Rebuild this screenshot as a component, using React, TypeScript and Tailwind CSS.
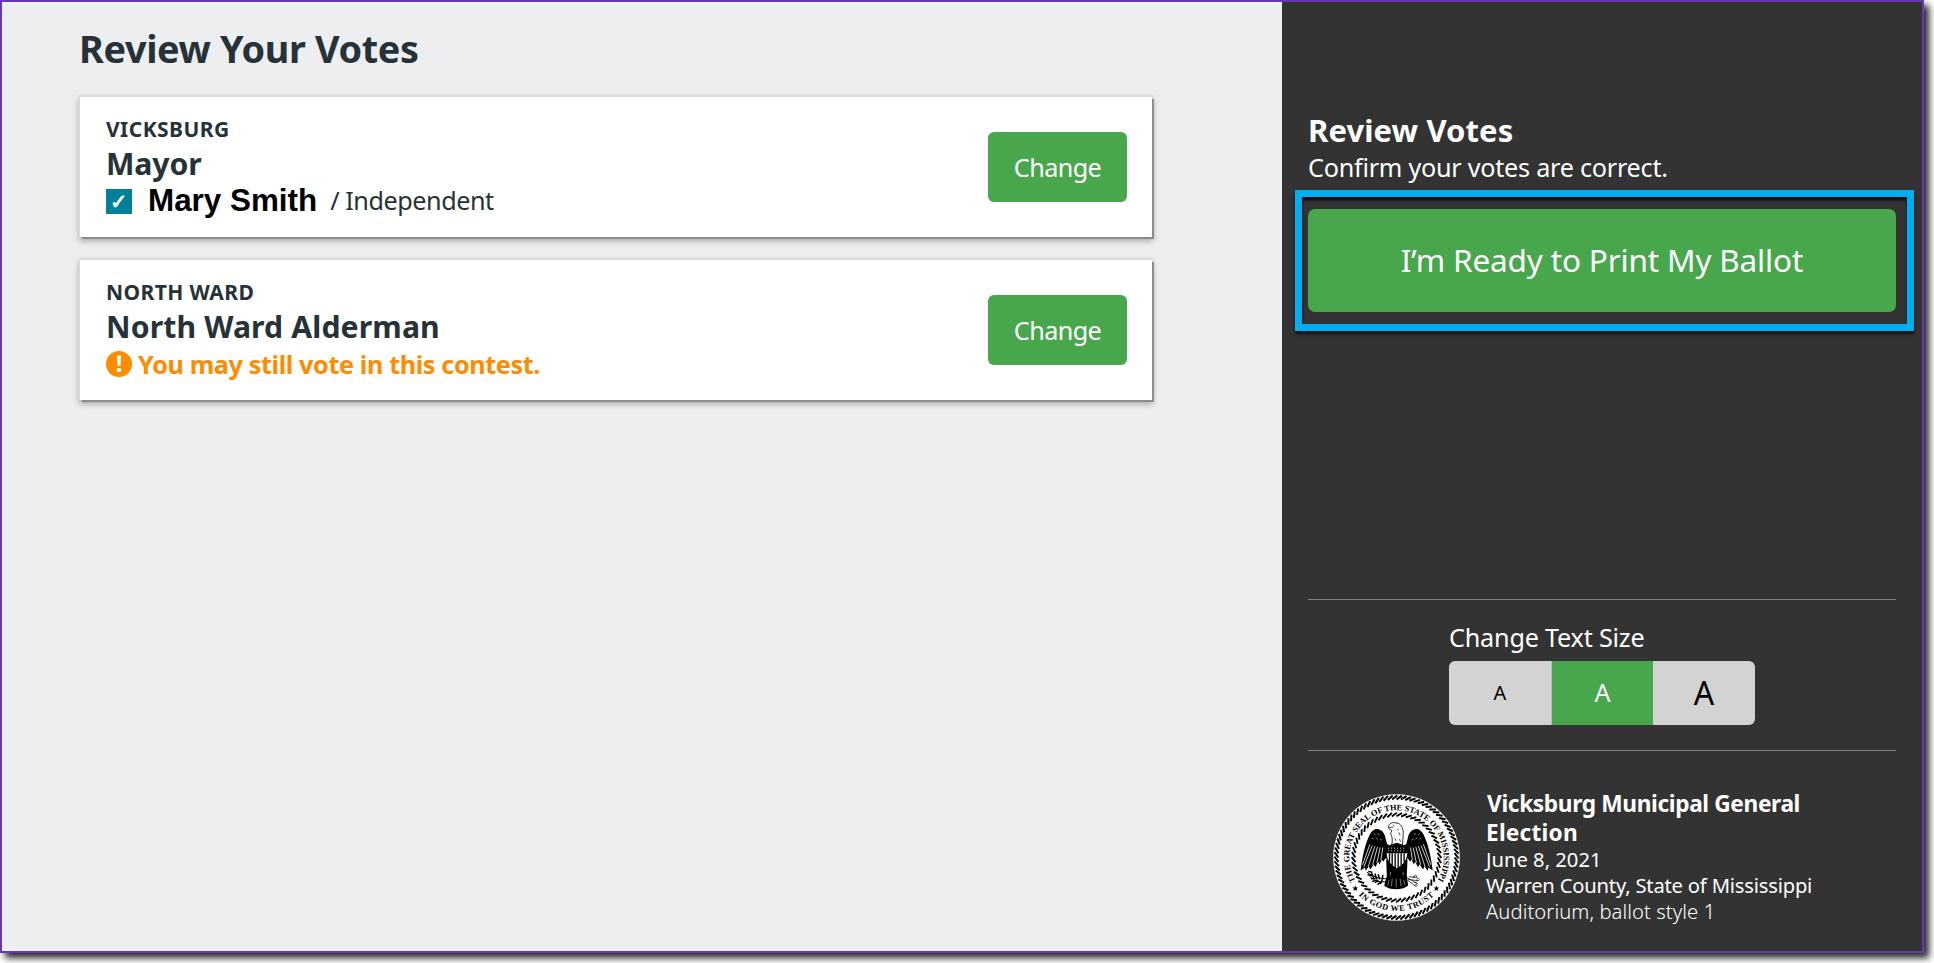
import type { ReactNode } from 'react';

const CX = 261;
const CY = 262;

function polar(r: number, deg: number): string {
  const a = (deg * Math.PI) / 180;
  return `${(CX + r * Math.sin(a)).toFixed(1)} ${(CY - r * Math.cos(a)).toFixed(1)}`;
}

function rope(count: number, inner: number, outer: number, twist: number): string {
  return Array.from({ length: count }, (_, i) => {
    const deg = (i * 360) / count;
    return `M${polar(inner, deg)}L${polar(outer, deg + twist)}`;
  }).join('');
}

const STAR = 'M0-9 2.6-2.8 9-2.8 3.8 1.3 5.8 8 0 4-5.8 8-3.8 1.3-9-2.8-2.6-2.8Z';

function Wing() {
  return (
    <g>
      <path
        d="M202 176C218 177 226 190 228 204L234 226 234 264 227 266 221 275 217 268 210 283 206 275 197 291 193 282 182 298 178 288 168 302 166 292 153 301C158 262 166 222 180 194 186 182 194 176 202 176Z"
        fill="#000"
      />
      <path
        d="M188 226 163 290M196 228 176 290M204 230 189 284M212 232 202 278M220 232 214 270M181 222 159 284"
        stroke="#fff"
        strokeWidth="2.4"
      />
      <path d="M192 190l6 4M204 190l6 4M187 203l6 4M199 203l6 4M211 206l6 4" stroke="#fff" strokeWidth="1.6" />
    </g>
  );
}

function Seal() {
  return (
    <svg viewBox="70 71 382 382" className="h-[127px] w-[127px] shrink-0" fill="none">
      <defs>
        <path id="seal-top" d={`M${polar(142, -122)}A142 142 0 1 1 ${polar(142, 122)}`} />
        <path id="seal-bottom" d={`M${polar(161, 228)}A161 161 0 0 0 ${polar(161, 132)}`} />
      </defs>
      <circle cx={CX} cy={CY} r="190.5" fill="#fff" />
      <path d={rope(84, 175, 187, 5)} stroke="#000" strokeWidth="6" />
      <path d={rope(56, 124, 135, 7)} stroke="#000" strokeWidth="5.6" />
      <g fill="#000" fontFamily="Liberation Serif, serif" fontWeight="700" fontSize="25">
        <text>
          <textPath href="#seal-top" startOffset="6" textLength="591">
            THE GREAT SEAL OF THE STATE OF MISSISSIPPI
          </textPath>
        </text>
        <text>
          <textPath href="#seal-bottom" startOffset="8" textLength="252">
            IN GOD WE TRUST
          </textPath>
        </text>
      </g>
      <path d={STAR} fill="#000" transform="translate(137 355)" />
      <path d={STAR} fill="#000" transform="translate(381 355)" />
      <Wing />
      <g transform="matrix(-1 0 0 1 523 0)">
        <Wing />
      </g>
      <path
        d="M246 226C250 212 249 200 243 190L247 181 237 174C235 166 241 157 252 157L266 159C277 164 283 178 281 194L279 226"
        fill="#fff"
        stroke="#000"
        strokeWidth="2.4"
      />
      <path d="M238 172 252 170M250 164l4 2M256 204l4 8M268 186l4 10M270 206l3 9M263 176l4 5" stroke="#000" strokeWidth="2" />
      <path d="M230 268 294 268 292 318 296 346C284 356 268 358 252 357 240 356 230 352 224 346L232 318Z" fill="#000" />
      <path
        d="M243 306v10M281 306v10M238 330l-3 16M248 326l-2 22M260 326v26M272 326l3 22M283 330l3 14"
        stroke="#fff"
        strokeWidth="1.4"
      />
      <path
        d="M228 222 240 226 262 219 283 226 297 222 295 250C293 272 280 286 262 295 244 286 231 272 230 250Z"
        fill="#fff"
        stroke="#000"
        strokeWidth="3"
      />
      <path d="M229 223 240 227 262 220 283 227 296 223 295 249 230 249Z" fill="#000" />
      <path d="M240 249v28M248 249v36M257 249v42M266 249v42M275 249v37M284 249v28" stroke="#000" strokeWidth="4" />
      <path d="M236 234h52M236 242h52" stroke="#fff" strokeWidth="2.6" strokeDasharray="3 6" />
      <path d="M172 306C190 320 210 326 234 326M180 318C196 334 212 338 232 334" stroke="#000" strokeWidth="3" />
      <path
        d="M176 304l12 2M174 314l14 2M186 308l6 16M196 310l6 18M184 326l14-2M196 338l10-8M206 312l4 16M212 342l6-12M220 314l-2 16M204 344l8-8M188 334l12-4"
        stroke="#000"
        strokeWidth="4.4"
      />
      <path d="M292 322 326 342M294 330 318 348M298 320 324 322M296 328 328 332M310 324l6-8M314 338l8-2" stroke="#000" strokeWidth="2.2" />
      <circle cx="318" cy="318" r="3.5" fill="#fff" stroke="#000" strokeWidth="1.6" />
      <circle cx="326" cy="328" r="3.5" fill="#fff" stroke="#000" strokeWidth="1.6" />
      <circle cx="320" cy="346" r="3" fill="#fff" stroke="#000" strokeWidth="1.6" />
    </svg>
  );
}

function ContestCard({ district, title, titleClass, districtClass, children }: {
  district: string;
  title: string;
  titleClass: string;
  districtClass: string;
  children: ReactNode;
}) {
  return (
    <section className="-ml-px flex h-[140px] w-[1072px] items-center justify-between bg-white pr-[25px] pl-[26px] shadow-[2px_2px_0_#8b8c8c,0_-1px_1px_1px_#dadbdc,0_3px_6px_1px_rgba(0,0,0,0.3)]">
      <div className="h-[102px]">
        <p className={`text-[21px] leading-[26px] font-bold ${districtClass}`}>{district}</p>
        <h2 className={`text-[30.2px] leading-[44px] font-bold ${titleClass}`}>{title}</h2>
        {children}
      </div>
      <button className="h-[70px] w-[139px] rounded-[6px] bg-[#48a74c] text-[25.2px] leading-[70px] tracking-[-0.6px] text-white">
        Change
      </button>
    </section>
  );
}

export default function App() {
  return (
    <div className="h-[963px] w-[1934px] overflow-hidden bg-white font-['Noto_Sans',sans-serif]">
      <div className="flex h-[953px] w-[1924px] border-2 border-[#6737b4] bg-[#edeef0] text-[#263238] shadow-[5px_5px_7px_rgba(0,0,0,0.85)]">
        <main className="flex w-[1280px] shrink-0 flex-col pt-[20px] pl-[79px]">
          <h1 className="-ml-[2px] text-[37.8px] leading-[54px] font-bold tracking-[-0.35px]">Review Your Votes</h1>
          <div className="mt-[21px] flex flex-col gap-[23px]">
            <ContestCard district="VICKSBURG" title="Mayor" districtClass="tracking-[0.45px]" titleClass="tracking-[-0.1px]">
              <div className="flex h-[30px] items-center">
                <span className="flex h-[25px] w-[26px] items-center justify-center bg-[#028099] text-[21px] leading-none font-bold text-white">
                  ✓
                </span>
                <span className="ml-[16px] font-['Liberation_Sans',sans-serif] text-[31.4px] leading-[30px] font-bold text-black">
                  Mary Smith
                </span>
                <span className="mb-[2px] ml-[13px] text-[25.2px] leading-[30px] tracking-[-0.45px]">/ Independent</span>
              </div>
            </ContestCard>
            <ContestCard
              district="NORTH WARD"
              title="North Ward Alderman"
              districtClass="tracking-[0.4px]"
              titleClass="tracking-[0.12px]"
            >
              <div className="flex h-[30px] items-center text-[#ff8c00]">
                <svg viewBox="0 0 26 26" className="h-[26px] w-[26px]">
                  <circle cx="13" cy="13" r="13" fill="#ff8c00" />
                  <path d="M10.9 4.6h4.2l-.6 10.2h-3z" fill="#fff" />
                  <circle cx="13" cy="19" r="2.3" fill="#fff" />
                </svg>
                <span className="ml-[6px] text-[25.2px] leading-[30px] font-bold tracking-[-0.38px]">
                  You may still vote in this contest.
                </span>
              </div>
            </ContestCard>
          </div>
        </main>

        <aside className="flex grow flex-col bg-[#333333] px-[26px] pt-[108px] text-white">
          <h2 className="text-[31px] leading-[40px] font-bold tracking-[0.1px]">Review Votes</h2>
          <p className="text-[25.2px] leading-[34px] tracking-[-0.25px]">Confirm your votes are correct.</p>
          <div className="-mr-[18px] -ml-[13px] mt-[6px] h-[141px] shrink-0 border-7 border-[#00aef2] px-[6px] pt-[12px] shadow-[0_3px_3px_rgba(0,0,0,0.65),inset_0_3px_3px_rgba(0,0,0,0.8)]">
            <button className="h-[103px] w-[588px] rounded-[7px] bg-[#48a74c] text-[31.5px] leading-[101px] tracking-[-0.17px]">
              <span className="block h-[103px] leading-[101px]">I’m Ready to Print My Ballot</span>
            </button>
          </div>

          <div className="mt-auto flex h-[152px] shrink-0 flex-col items-center border-y border-[#808080] pt-[19px]">
            <div className="w-[306px]">
              <p className="text-[25.2px] leading-[36px] tracking-[-0.2px]">Change Text Size</p>
              <div className="mt-[6px] flex h-[64px] overflow-hidden rounded-[6px] bg-[#d3d3d3] text-black">
                <button className="w-[103px] border-r border-[#bdbdbd] text-[20px]">A</button>
                <button className="w-[101px] bg-[#48a74c] text-[25.2px] text-white">A</button>
                <button className="w-[102px] text-[32px]">A</button>
              </div>
            </div>
          </div>

          <div className="flex h-[200px] shrink-0 pt-[43px] pl-[25px]">
            <Seal />
            <div className="-mt-[5px] ml-[26px]">
              <h3 className="ml-px text-[22.7px] leading-[29px] font-bold tracking-[-0.37px]">
                Vicksburg Municipal General
                <br />
                <span className="-ml-px tracking-[0.2px]">Election</span>
              </h3>
              <div className="-mt-px text-[20.2px] leading-[26px]">
                <p>June 8, 2021</p>
                <p className="tracking-[-0.2px]">Warren County, State of Mississippi</p>
                <p className="font-light tracking-[0.08px]">Auditorium, ballot style 1</p>
              </div>
            </div>
          </div>
        </aside>
      </div>
    </div>
  );
}
